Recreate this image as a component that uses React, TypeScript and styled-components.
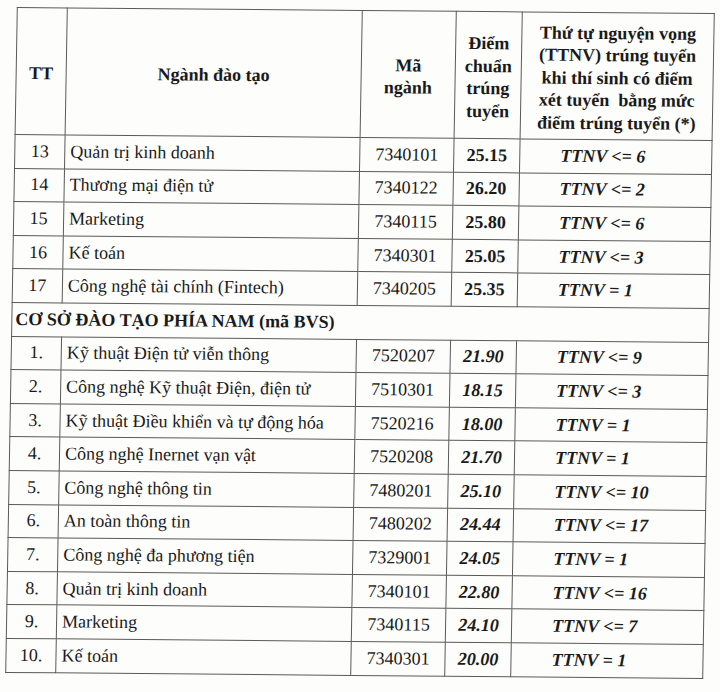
import styled, { createGlobalStyle } from "styled-components";

const GlobalStyle = createGlobalStyle`
  html, body {
    margin: 0;
    padding: 0;
    background: #fdfdfc;
  }
  body {
    font-family: "Liberation Serif", "Times New Roman", serif;
    color: #1c1c1c;
  }
`

const Page = styled.div`
    width: 720px;
    height: 692px;
    overflow: hidden;
    padding: 10px 0 0 11px;
    box-sizing: border-box;
`

const Table = styled.table`
    width: 697px;
    border-collapse: collapse;
    table-layout: fixed;
    font-family: "Liberation Serif", "Times New Roman", serif;
    font-size: 18px;
    color: #1a1a1a;
    transform: rotate(0.5deg) skewX(-0.5deg);
    transform-origin: center center;
`

const HeadCell = styled.th<{ $w: number }>`
    width: ${props => props.$w}px;
    height: 127px;
    border: 1px solid #5a5a5a;
    font-weight: bold;
    line-height: 1.25;
    text-align: center;
    vertical-align: middle;
    padding: 4px 2px 0;
    box-sizing: border-box;
`

const Row = styled.tr`
    height: 33.6px;
`

const Cell = styled.td<{ $align?: string; $bold?: boolean; $italic?: boolean; $pad?: number }>`
    border: 1px solid #5a5a5a;
    text-align: ${props => props.$align || "left"};
    font-weight: ${props => props.$bold ? "bold" : "normal"};
    font-style: ${props => props.$italic ? "italic" : "normal"};
    padding: 0 0 0 ${props => props.$pad ?? 0}px;
    vertical-align: middle;
    white-space: nowrap;
`

const SectionCell = styled.td`
    border: 1px solid #5a5a5a;
    font-weight: bold;
    padding: 0 0 0 3px;
    white-space: nowrap;
`

interface IMajor {
    tt: string,
    name: string,
    code: string,
    score: string,
    ttnv: string,
}

const north: IMajor[] = [
    { tt: "13", name: "Quản trị kinh doanh", code: "7340101", score: "25.15", ttnv: "TTNV <= 6" },
    { tt: "14", name: "Thương mại điện tử", code: "7340122", score: "26.20", ttnv: "TTNV <= 2" },
    { tt: "15", name: "Marketing", code: "7340115", score: "25.80", ttnv: "TTNV <= 6" },
    { tt: "16", name: "Kế toán", code: "7340301", score: "25.05", ttnv: "TTNV <= 3" },
    { tt: "17", name: "Công nghệ tài chính (Fintech)", code: "7340205", score: "25.35", ttnv: "TTNV = 1" },
]

const south: IMajor[] = [
    { tt: "1.", name: "Kỹ thuật Điện tử viễn thông", code: "7520207", score: "21.90", ttnv: "TTNV <= 9" },
    { tt: "2.", name: "Công nghệ Kỹ thuật Điện, điện tử", code: "7510301", score: "18.15", ttnv: "TTNV <= 3" },
    { tt: "3.", name: "Kỹ thuật Điều khiển và tự động hóa", code: "7520216", score: "18.00", ttnv: "TTNV = 1" },
    { tt: "4.", name: "Công nghệ Inernet vạn vật", code: "7520208", score: "21.70", ttnv: "TTNV = 1" },
    { tt: "5.", name: "Công nghệ thông tin", code: "7480201", score: "25.10", ttnv: "TTNV <= 10" },
    { tt: "6.", name: "An toàn thông tin", code: "7480202", score: "24.44", ttnv: "TTNV <= 17" },
    { tt: "7.", name: "Công nghệ đa phương tiện", code: "7329001", score: "24.05", ttnv: "TTNV = 1" },
    { tt: "8.", name: "Quản trị kinh doanh", code: "7340101", score: "22.80", ttnv: "TTNV <= 16" },
    { tt: "9.", name: "Marketing", code: "7340115", score: "24.10", ttnv: "TTNV <= 7" },
    { tt: "10.", name: "Kế toán", code: "7340301", score: "20.00", ttnv: "TTNV = 1" },
]

function MajorRow({ m, italicScore }: { m: IMajor, italicScore: boolean }) {
    return (
        <Row>
            <Cell $align="center">{m.tt}</Cell>
            <Cell $pad={5}>{m.name}</Cell>
            <Cell $align="center">{m.code}</Cell>
            <Cell $align="center" $bold $italic={italicScore}>{m.score}</Cell>
            <Cell $pad={40} $bold $italic>{m.ttnv}</Cell>
        </Row>
    )
}

function App() {
    return (
        <>
            <GlobalStyle />
            <Page>
                <Table>
                    <thead>
                        <tr>
                            <HeadCell $w={50}>TT</HeadCell>
                            <HeadCell $w={295}>Ngành đào tạo</HeadCell>
                            <HeadCell $w={94}>Mã<br />ngành</HeadCell>
                            <HeadCell $w={66}>Điểm<br />chuẩn<br />trúng<br />tuyển</HeadCell>
                            <HeadCell $w={192}>
                                Thứ tự nguyện vọng<br />
                                (TTNV) trúng tuyển<br />
                                khi thí sinh có điểm<br />
                                xét tuyển&nbsp; bằng mức<br />
                                điểm trúng tuyển (*)
                            </HeadCell>
                        </tr>
                    </thead>
                    <tbody>
                        {north.map(m => <MajorRow key={m.tt} m={m} italicScore={false} />)}
                        <Row>
                            <SectionCell colSpan={5}>CƠ SỞ ĐÀO TẠO PHÍA NAM (mã BVS)</SectionCell>
                        </Row>
                        {south.map(m => <MajorRow key={m.tt} m={m} italicScore={true} />)}
                    </tbody>
                </Table>
            </Page>
        </>
    )
}

export default App;
